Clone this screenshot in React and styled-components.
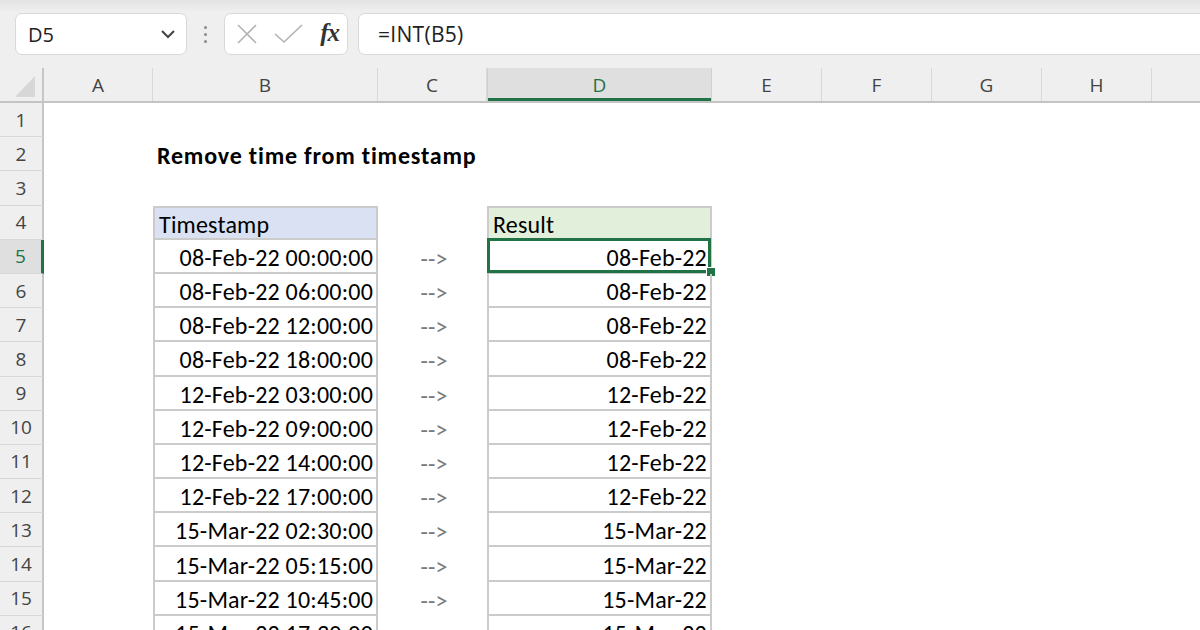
import React from "react";
import styled, { createGlobalStyle, css } from "styled-components";

const GlobalStyle = createGlobalStyle`
  html, body {
    margin: 0;
    padding: 0;
    background: #fff;
  }
  body {
    overflow: hidden;
  }
`;

const UI_FONT = `"Open Sans", "Noto Sans", sans-serif`;
const CELL_FONT = `Carlito, Lato, "Liberation Sans", sans-serif`;
const GREEN = "#217346";
const COLS = "44px 109px 225px 109px 225px 110px 110px 110px 110px 110px";

const Window = styled.div`
  width: 1200px;
  height: 630px;
  overflow: hidden;
  display: flex;
  flex-direction: column;
  background: #fff;
`;

const Toolbar = styled.div`
  flex: none;
  height: 68px;
  box-sizing: border-box;
  padding-top: 13px;
  display: flex;
  align-items: flex-start;
  background: linear-gradient(#e3e3e3, #efefef 12px);
`;

const Box = styled.div`
  height: 42px;
  box-sizing: border-box;
  background: #fff;
  border: 1px solid #d9d9d9;
  border-radius: 7px;
  display: flex;
  align-items: center;
  font-family: ${UI_FONT};
  color: #222;
`;

const NameBox = styled(Box)`
  margin-left: 15px;
  width: 172px;
  padding: 0 10px 0 12px;
  justify-content: space-between;
  font-size: 20px;
`;

const Dots = styled.div`
  width: 37px;
  height: 42px;
  display: flex;
  flex-direction: column;
  align-items: center;
  justify-content: center;
  gap: 4px;

  span {
    width: 3px;
    height: 3px;
    border-radius: 50%;
    background: #8a8a8a;
  }
`;

const FxBox = styled(Box)`
  width: 124px;
  padding: 0 8px 0 11px;
  justify-content: space-between;
`;

const Fx = styled.span`
  font-family: "Liberation Serif", "DejaVu Serif", serif;
  font-style: italic;
  font-weight: bold;
  font-size: 25px;
  color: #333;
  letter-spacing: -1px;
  margin-top: -2px;
`;

const FormulaBox = styled(Box)`
  flex: 1;
  margin-left: 10px;
  margin-right: -20px;
  padding-left: 19px;
  font-size: 21px;
  letter-spacing: 0.3px;
  border-radius: 7px 0 0 7px;
`;

const HeaderRow = styled.div`
  flex: none;
  display: grid;
  grid-template-columns: ${COLS};
  height: 35px;
  box-sizing: border-box;
  background: #efefef;
  border-bottom: 2px solid #c4c4c4;
`;

const Corner = styled.div`
  display: flex;
  align-items: flex-end;
  justify-content: flex-end;
  padding: 0 7px 4px 0;
  border-right: 2px solid #c6c6c6;
`;

const ColHeader = styled.div`
  display: flex;
  align-items: center;
  justify-content: center;
  border-right: 1px solid #d8d8d8;
  font-family: ${UI_FONT};
  font-size: 19px;
  color: #444;

  ${(p) =>
    p.$selected &&
    css`
      background: #dfdfdf;
      color: ${GREEN};
      border-left: 1px solid #d0d0d0;
      border-right: 1px solid #d0d0d0;
      box-shadow: inset 0 -3px ${GREEN};
    `}
`;

const Body = styled.div`
  display: grid;
  grid-template-columns: ${COLS};
  grid-auto-rows: 34.2px;
`;

const RowHeader = styled.div`
  display: flex;
  align-items: center;
  justify-content: center;
  background: #efefef;
  border-right: 2px solid #c6c6c6;
  border-bottom: 1px solid #d8d8d8;
  font-family: ${UI_FONT};
  font-size: 19px;
  color: #444;

  ${(p) =>
    p.$selected &&
    css`
      background: #dfdfdf;
      color: ${GREEN};
      border-right-color: ${GREEN};
      border-right-width: 3px;
    `}
`;

const Cell = styled.div`
  position: relative;
  box-sizing: border-box;
  display: flex;
  align-items: center;
  padding: 3px 3px 0 4px;
  font-family: ${CELL_FONT};
  font-size: 24px;
  letter-spacing: 0.2px;
  color: #000;
  white-space: nowrap;
  justify-content: ${(p) =>
    p.$align === "right" ? "flex-end" : p.$align === "center" ? "center" : "flex-start"};

  ${(p) =>
    p.$bordered &&
    css`
      border-left: 2px solid #cbcbcb;
      border-right: 2px solid #cbcbcb;
      border-bottom: 2px solid #cbcbcb;
    `}

  ${(p) =>
    p.$head &&
    css`
      border-top: 2px solid #cbcbcb;
      background: ${p.$head};
    `}

  ${(p) =>
    p.$active &&
    css`
      &::before {
        content: "";
        position: absolute;
        top: -2px;
        left: -2px;
        right: -1px;
        bottom: -1px;
        border: 3px solid ${GREEN};
      }
      &::after {
        content: "";
        position: absolute;
        right: -6px;
        bottom: -5px;
        width: 8px;
        height: 8px;
        background: ${GREEN};
        border: 1px solid #fff;
      }
    `}
`;

const Title = styled(Cell)`
  font-weight: bold;
  letter-spacing: 0.8px;
  overflow: visible;
`;

const Arrow = styled(Cell)`
  color: #7a7a7a;
  padding-left: 6px;
`;

const rows = [
  ["08-Feb-22 00:00:00", "08-Feb-22"],
  ["08-Feb-22 06:00:00", "08-Feb-22"],
  ["08-Feb-22 12:00:00", "08-Feb-22"],
  ["08-Feb-22 18:00:00", "08-Feb-22"],
  ["12-Feb-22 03:00:00", "12-Feb-22"],
  ["12-Feb-22 09:00:00", "12-Feb-22"],
  ["12-Feb-22 14:00:00", "12-Feb-22"],
  ["12-Feb-22 17:00:00", "12-Feb-22"],
  ["15-Mar-22 02:30:00", "15-Mar-22"],
  ["15-Mar-22 05:15:00", "15-Mar-22"],
  ["15-Mar-22 10:45:00", "15-Mar-22"],
  ["15-Mar-22 17:30:00", "15-Mar-22"],
];

// column I sits mostly past the right edge, so its letter isn't shown
const letters = ["A", "B", "C", "D", "E", "F", "G", "H", ""];

const Chevron = () => (
  <svg width="16" height="10" viewBox="0 0 16 10">
    <path d="M2 2 L8 8 L14 2" fill="none" stroke="#444" strokeWidth="2" />
  </svg>
);

const Cross = () => (
  <svg width="22" height="22" viewBox="0 0 22 22">
    <path d="M2 2 L20 20 M20 2 L2 20" stroke="#b3b3b3" strokeWidth="1.6" />
  </svg>
);

const Check = () => (
  <svg width="30" height="20" viewBox="0 0 30 20">
    <path d="M1 10 L10 18 L28 1" fill="none" stroke="#b3b3b3" strokeWidth="1.6" />
  </svg>
);

const CornerMark = () => (
  <svg width="20" height="21" viewBox="0 0 20 21">
    <polygon points="20,0 20,21 0,21" fill="#d7d7d7" />
  </svg>
);

const Blank = () => <Cell />;

const App = () => {
  const body = [];

  const pushRow = (n, cells, selected) => {
    body.push(
      <RowHeader key={`h${n}`} $selected={selected}>
        {n}
      </RowHeader>
    );
    cells.forEach((c, i) => body.push(React.cloneElement(c, { key: `${n}-${i}` })));
  };

  const empties = (count) => Array.from({ length: count }, () => <Blank />);

  pushRow(1, empties(9));
  pushRow(2, [<Blank />, <Title>Remove time from timestamp</Title>, ...empties(7)]);
  pushRow(3, empties(9));
  pushRow(4, [
    <Blank />,
    <Cell $bordered $head="#d9e1f2">Timestamp</Cell>,
    <Blank />,
    <Cell $bordered $head="#e2efda">Result</Cell>,
    ...empties(5),
  ]);
  rows.forEach(([stamp, date], i) => {
    const n = i + 5;
    pushRow(
      n,
      [
        <Blank />,
        <Cell $bordered $align="right">{stamp}</Cell>,
        <Arrow $align="center">--&gt;</Arrow>,
        <Cell $bordered $align="right" $active={n === 5}>
          {date}
        </Cell>,
        ...empties(5),
      ],
      n === 5
    );
  });

  return (
    <Window>
      <GlobalStyle />
      <Toolbar>
        <NameBox>
          <span>D5</span>
          <Chevron />
        </NameBox>
        <Dots>
          <span />
          <span />
          <span />
        </Dots>
        <FxBox>
          <Cross />
          <Check />
          <Fx>fx</Fx>
        </FxBox>
        <FormulaBox>=INT(B5)</FormulaBox>
      </Toolbar>
      <HeaderRow>
        <Corner>
          <CornerMark />
        </Corner>
        {letters.map((l, i) => (
          <ColHeader key={i} $selected={l === "D"}>
            {l}
          </ColHeader>
        ))}
      </HeaderRow>
      <Body>{body}</Body>
    </Window>
  );
};

export default App;
